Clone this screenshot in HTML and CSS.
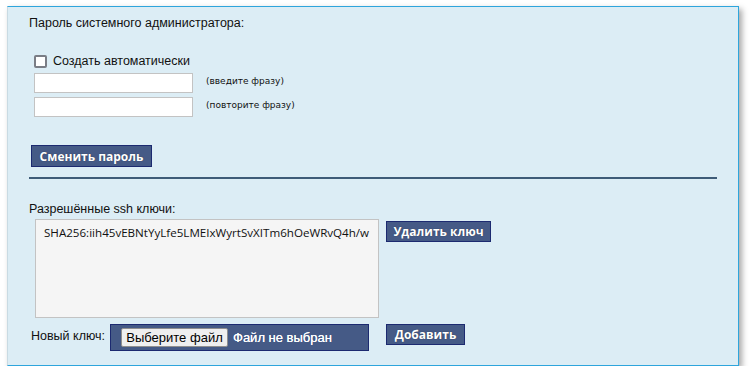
FILE: index.html
```html
<!DOCTYPE html>
<html>
<head>
<meta charset="utf-8">
<link rel="stylesheet" href="styles.css">
</head>
<body>
<div class="panel">
  <div class="title">Пароль системного администратора:</div>
  <div class="pw">
    <label class="auto"><span class="cb"></span>Создать автоматически</label>
    <div class="pwrow"><span class="field"></span><span class="hint">(введите фразу)</span></div>
    <div class="pwrow"><span class="field"></span><span class="hint">(повторите фразу)</span></div>
  </div>
  <div class="btnrow"><span class="btn btn-change">Сменить пароль</span></div>
  <div class="rule"></div>
  <div class="keys-title">Разрешённые ssh ключи:</div>
  <div class="keys">
    <div class="keybox">SHA256:iih45vEBNtYyLfe5LMEIxWyrtSvXITm6hOeWRvQ4h/w</div>
    <span class="btn btn-del">Удалить ключ</span>
  </div>
  <div class="newkey">
    <span class="nk-label">Новый ключ:</span>
    <div class="file"><span class="choose">Выберите файл</span><span class="nofile">Файл не выбран</span></div>
    <span class="btn btn-add">Добавить</span>
  </div>
</div>
</body>
</html>
```
FILE: styles.css
```css
html, body { margin: 0; padding: 0; background: #ffffff; }
body { font-family: "Liberation Sans", Arial, sans-serif; font-size: 12.5px; color: #111; }
.panel {
  box-sizing: border-box;
  margin: 6px 0 0 7px;
  width: 732px;
  height: 360px;
  background: #dcedf5;
  border: 1px solid #2ea5dc;
  border-left-color: #c9dbe3;
  box-shadow: 3px 3px 6px rgba(0,0,0,0.35);
  padding: 8px 21px 0 21px;
}
.title { line-height: 16px; height: 16px; }
.pw { margin: 22px 0 0 5px; }
.auto { display: flex; align-items: center; height: 16px; line-height: 16px; }
.cb {
  box-sizing: border-box; width: 13px; height: 13px;
  border: 2px solid #7a7d85; border-radius: 2px; background: #fff;
  margin-right: 6px;
}
.pwrow { display: flex; align-items: center; margin-top: 4px; }
.field {
  box-sizing: border-box; width: 159px; height: 20px;
  background: #fff; border: 1px solid #c3c3c3;
}
.hint { font-family: "DejaVu Sans", sans-serif; font-size: 9px; margin-left: 13px; margin-top: -5px; color: #111; }
.btnrow { margin-top: 28px; margin-left: 2px; display: flex; }
.btn {
  box-sizing: border-box; display: inline-flex; align-items: center; justify-content: center;
  background: #455a86; border: 1px solid #1c2a70; color: #fff;
  font-family: "Open Sans", sans-serif; font-weight: bold; font-size: 12px;
  text-shadow: 0 0 1px rgba(0,0,0,0.5);
}
.btn-change { width: 121px; height: 22px; }
.rule { height: 2px; background: #3e5c78; margin-top: 10px; width: 688px; }
.keys-title { margin-top: 22px; line-height: 16px; }
.keys { display: flex; align-items: flex-start; margin-top: 2px; margin-left: 6px; }
.keybox {
  box-sizing: border-box; width: 344px; height: 99px;
  background: #f5f5f5; border: 1px solid #c3c3c3;
  font-family: "Open Sans", sans-serif; font-size: 11.6px; line-height: 16px;
  padding: 5px 0 0 8px; color: #111; white-space: nowrap; overflow: hidden;
}
.btn-del { width: 105px; height: 21px; margin-left: 7px; margin-top: 2px; }
.newkey { display: flex; align-items: flex-start; margin-top: 6px; margin-left: 2px; }
.nk-label { line-height: 16px; margin-top: 4px; width: 79px; white-space: nowrap; }
.file {
  box-sizing: border-box; width: 259px; height: 27px;
  background: #455a86; border: 1px solid #1c2a70;
  display: flex; align-items: center; padding-left: 10px;
}
.choose {
  box-sizing: border-box; height: 19px; width: 107px;
  background: #efefef; border: 1px solid #8f8f8f; border-radius: 2px;
  display: flex; align-items: center; justify-content: center;
  font-size: 13px; color: #000;
}
.nofile { color: #fff; margin-left: 5px; font-size: 13px; text-shadow: 0 0 0.5px #fff; }
.btn-add { width: 79px; height: 21px; margin-left: 17px; }
```
